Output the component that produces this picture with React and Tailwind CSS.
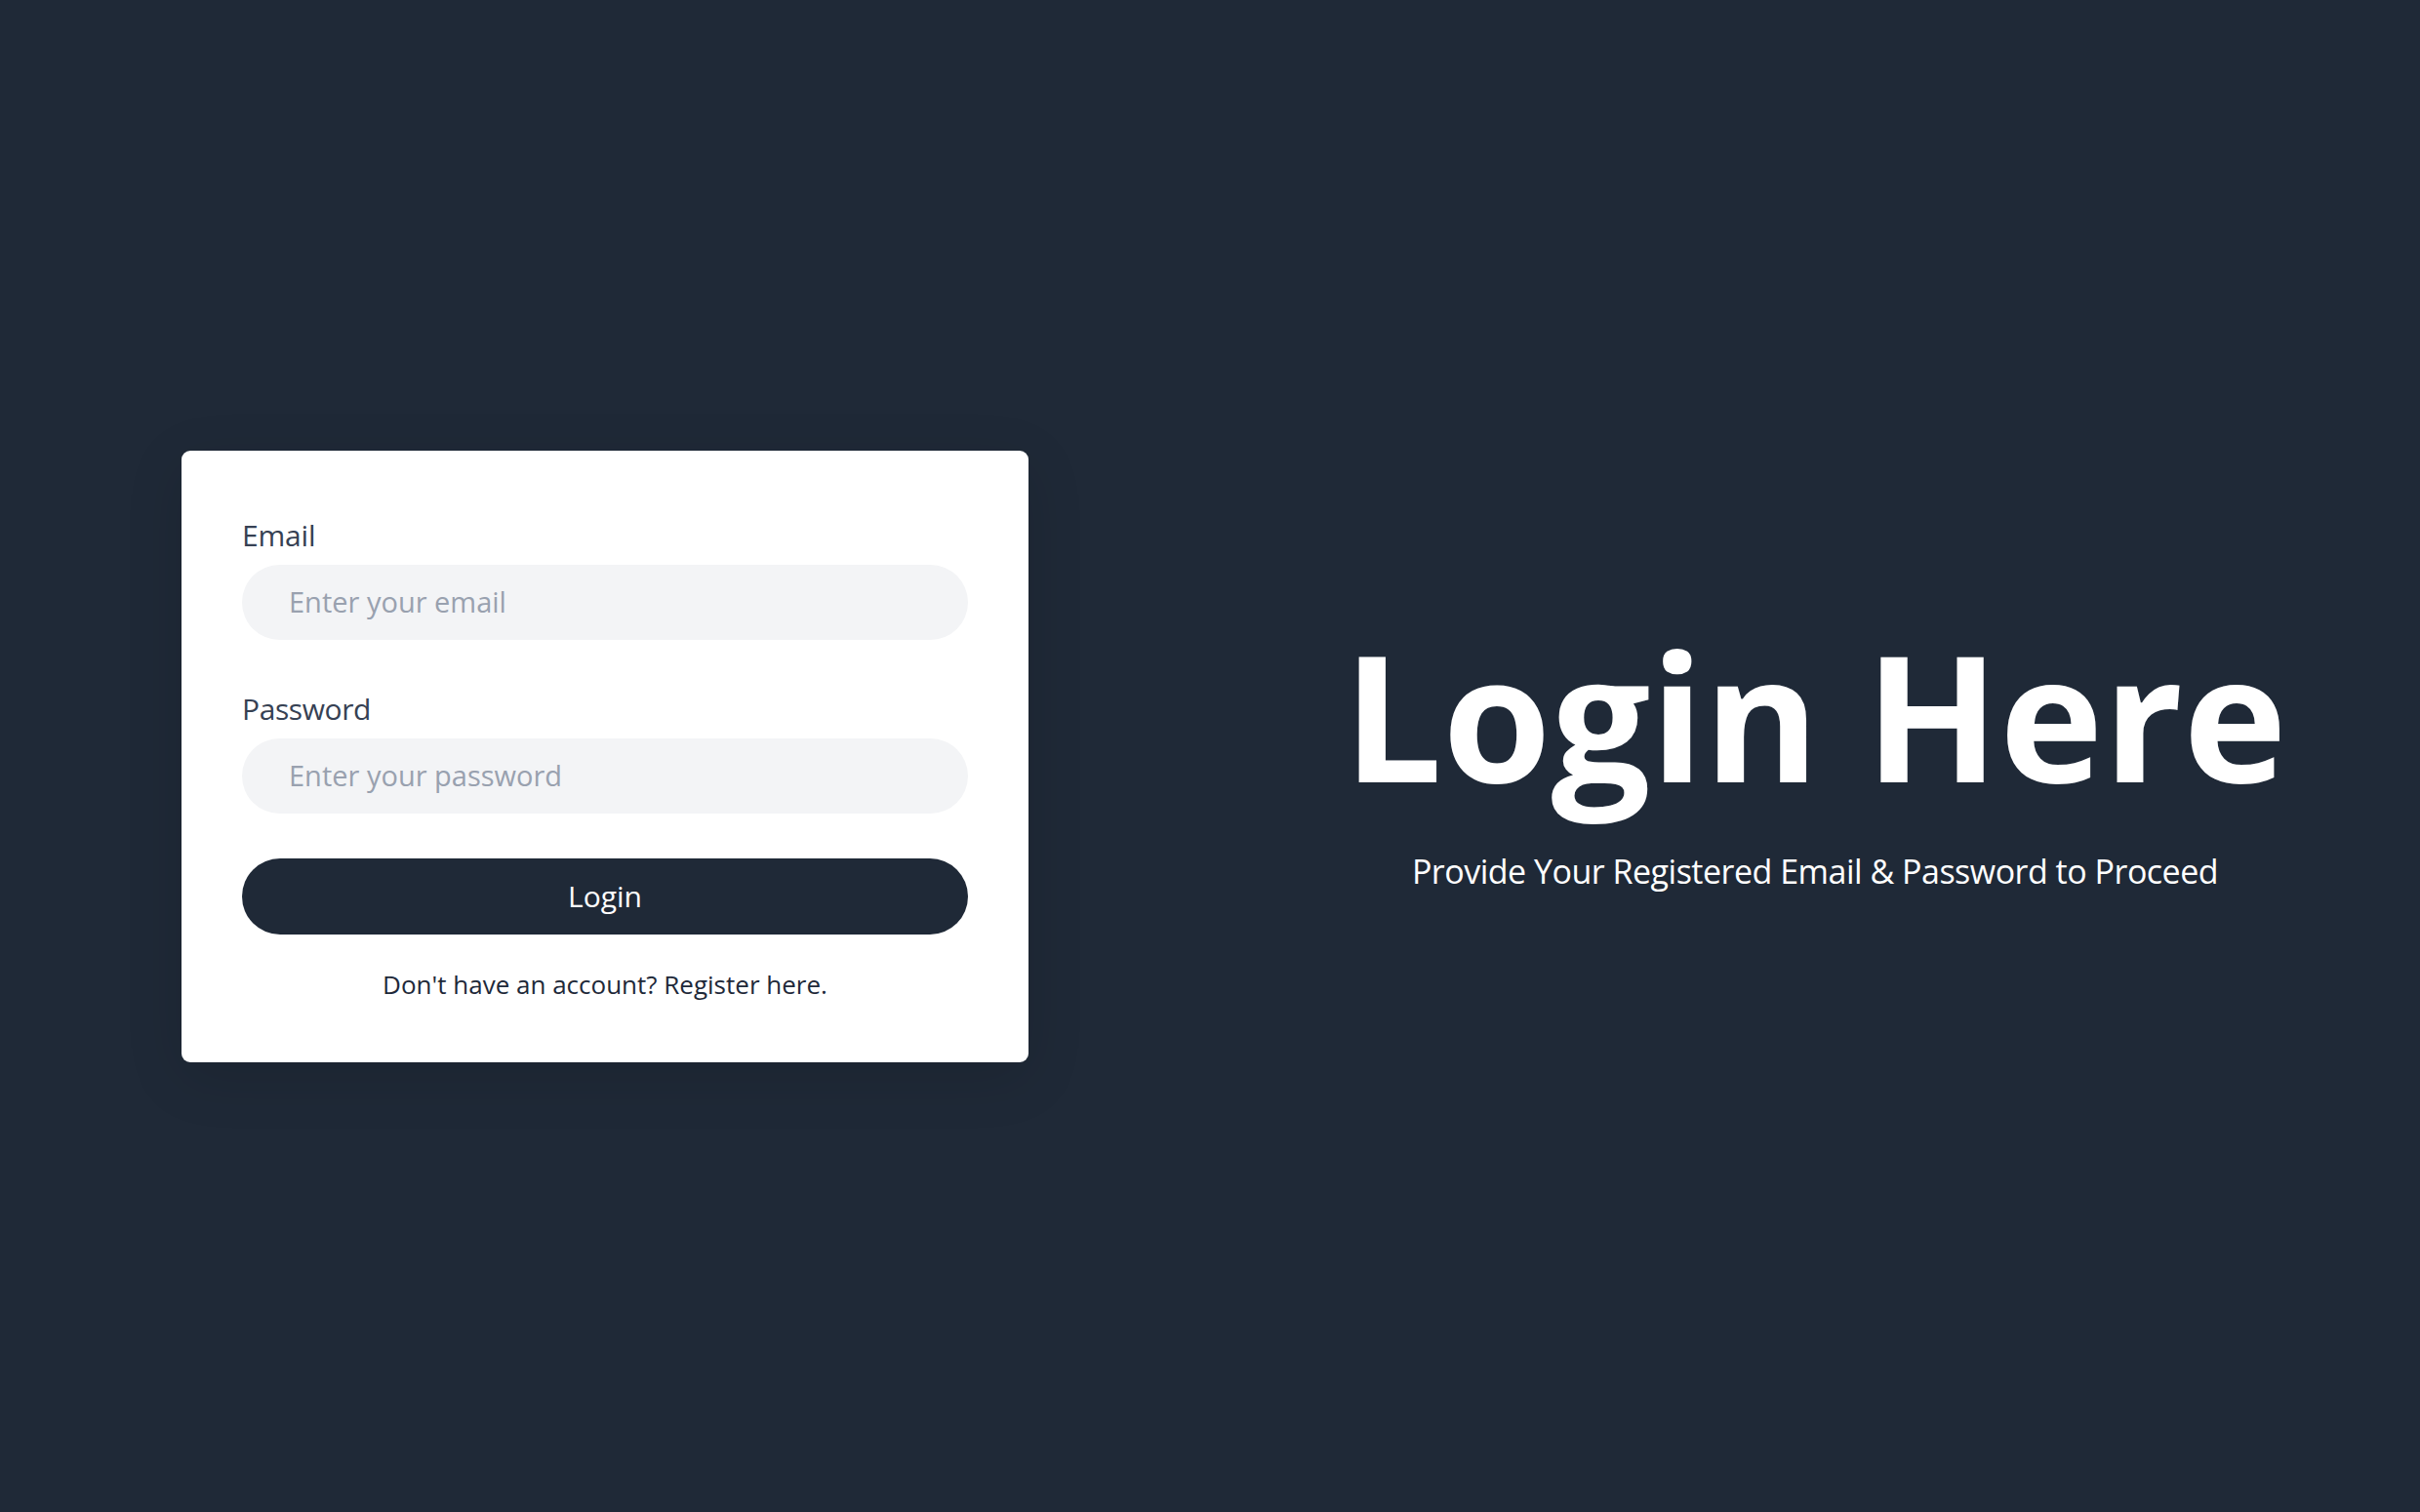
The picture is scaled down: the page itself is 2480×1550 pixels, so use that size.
import { useState } from "react";

export default function App() {
  const [email, setEmail] = useState("");
  const [password, setPassword] = useState("");

  return (
    <div className="min-h-screen bg-[#1f2937] grid grid-cols-2 items-center font-['Open_Sans',sans-serif]">
      {/* form side */}
      <div className="flex justify-center">
        <form
          onSubmit={(e) => e.preventDefault()}
          className="w-[868px] bg-white rounded-[9px] px-[62px] pt-[66px] pb-[59px] shadow-[0_15px_60px_rgba(0,0,0,0.12)]"
        >
          <label className="block text-[30px] leading-[42px] tracking-[-0.2px] text-gray-700 mb-[9px]">
            Email
          </label>
          <input
            type="email"
            value={email}
            onChange={(e) => setEmail(e.target.value)}
            placeholder="Enter your email"
            className="block w-full rounded-full bg-gray-100 px-[48px] py-[17.5px] text-[29px] leading-[42px] text-gray-800 placeholder:text-gray-400 outline-none mb-[50px]"
          />

          <label className="block text-[30px] leading-[42px] tracking-[-0.4px] text-gray-700 mb-[9px]">
            Password
          </label>
          <input
            type="password"
            value={password}
            onChange={(e) => setPassword(e.target.value)}
            placeholder="Enter your password"
            className="block w-full rounded-full bg-gray-100 px-[48px] py-[17.5px] text-[29px] leading-[42px] text-gray-800 placeholder:text-gray-400 outline-none mb-[46px]"
          />

          <button
            type="submit"
            className="block w-full rounded-full bg-[#1f2937] text-white py-[18px] text-[30px] leading-[42px]"
          >
            Login
          </button>

          <p className="mt-[30px] text-center text-[26px] leading-[42px] text-gray-800">
            Don't have an account? <a href="#">Register here.</a>
          </p>
        </form>
      </div>

      {/* heading side */}
      <div className="flex flex-col items-center text-center text-white pt-[10px]">
        <h1 className="text-[180px] leading-none font-bold">Login Here</h1>
        <p className="mt-[46px] text-[34px] leading-[48px] tracking-[-0.5px]">
          Provide Your Registered Email &amp; Password to Proceed
        </p>
      </div>
    </div>
  );
}
